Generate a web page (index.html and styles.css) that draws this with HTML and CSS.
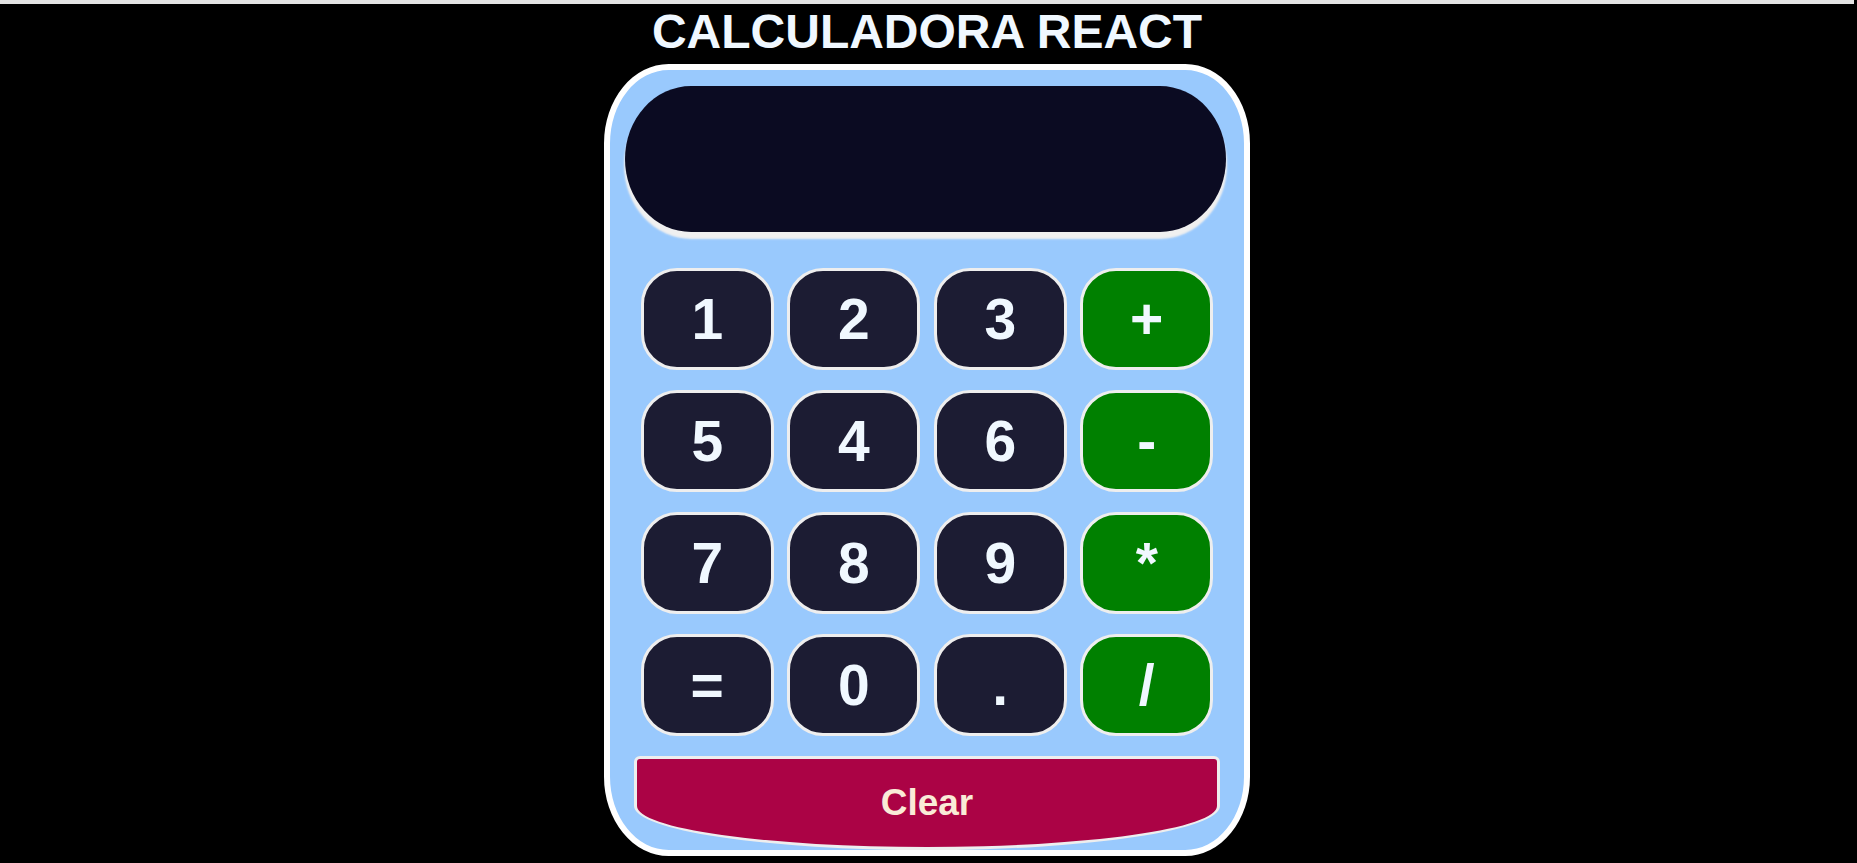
FILE: index.html
```html
<!DOCTYPE html>
<html lang="es">
<head>
<meta charset="utf-8">
<title>Calculadora React</title>
<link rel="stylesheet" href="styles.css">
</head>
<body>
<div class="topbar"></div>
<h1 class="title">CALCULADORA REACT</h1>
<div class="calculator">
  <div class="screen"></div>
  <div class="keypad">
    <button class="key">1</button>
    <button class="key">2</button>
    <button class="key">3</button>
    <button class="key op">+</button>
    <button class="key">5</button>
    <button class="key">4</button>
    <button class="key">6</button>
    <button class="key op">-</button>
    <button class="key">7</button>
    <button class="key">8</button>
    <button class="key">9</button>
    <button class="key op">*</button>
    <button class="key">=</button>
    <button class="key">0</button>
    <button class="key">.</button>
    <button class="key op">/</button>
  </div>
  <button class="clear">Clear</button>
</div>
</body>
</html>
```

FILE: styles.css
```css
html, body {
  margin: 0;
  padding: 0;
  background: #000;
}

body {
  font-family: "Liberation Sans", Arial, sans-serif;
  min-height: 863px;
  padding-right: 3px;
}

.topbar {
  height: 4px;
  background: #e3e3e3;
}

.title {
  margin: 0;
  text-align: center;
  font-size: 48px;
  font-weight: bold;
  line-height: normal;
  color: #f0f8ff;
}

.calculator {
  box-sizing: border-box;
  width: 646px;
  height: 792px;
  margin: 5px auto 0;
  border: 6px solid #fff;
  border-radius: 10%;
  background: #99c9fd;
  display: flex;
  flex-direction: column;
}

.screen {
  width: 601px;
  height: 146px;
  margin: 16px 0 0 15px;
  background: #0b0b22;
  border-radius: 11% / 50%;
  box-shadow: 0 6px 2px 1px #f0f0f0;
}

.keypad {
  display: grid;
  grid-template-columns: repeat(4, 133px);
  grid-auto-rows: 102px;
  column-gap: 13.5px;
  row-gap: 20px;
  justify-content: center;
  margin-top: 36px;
}

.key {
  box-sizing: border-box;
  margin: 0;
  padding: 0;
  border: 3px solid #eeeeee;
  border-radius: 36px;
  background: #1c1c33;
  color: #f0f8ff;
  font-family: "Liberation Sans", Arial, sans-serif;
  font-size: 57px;
  font-weight: bold;
  display: flex;
  align-items: center;
  justify-content: center;
}

.key.op {
  background: #008000;
}

.clear {
  box-sizing: border-box;
  width: 586px;
  height: 94px;
  margin: 20px auto 0;
  padding: 0;
  border: 3px solid #eeeeee;
  border-radius: 6px 6px 50% 50% / 6px 6px 44px 44px;
  background: #ab0345;
  color: #faebd7;
  font-family: "Liberation Sans", Arial, sans-serif;
  font-size: 37px;
  font-weight: bold;
}
```
